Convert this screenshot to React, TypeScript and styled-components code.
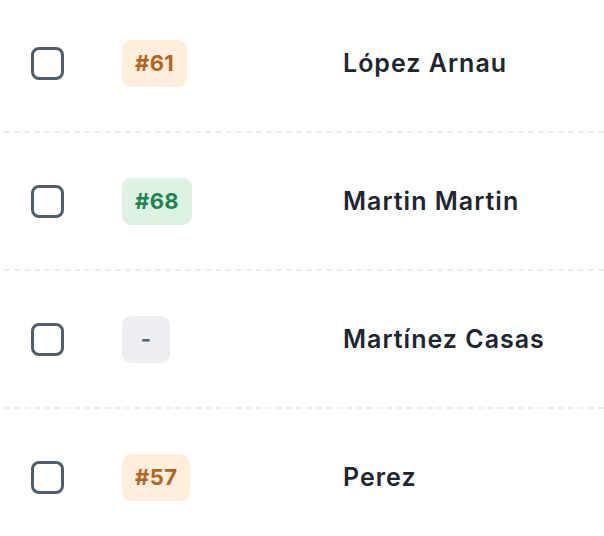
import React from 'react';
import styled, { createGlobalStyle } from 'styled-components';

const GlobalStyle = createGlobalStyle`
  html, body {
    margin: 0;
    padding: 0;
    background: #ffffff;
    overflow: hidden;
  }
  body {
    font-family: Inter, "Noto Sans", "Liberation Sans", sans-serif;
    -webkit-font-smoothing: antialiased;
  }
`;

type Tone = 'orange' | 'green' | 'gray';

const tones: Record<Tone, { bg: string; fg: string }> = {
    orange: { bg: '#feeedb', fg: '#b3651f' },
    green: { bg: '#dcf3e3', fg: '#1f8550' },
    gray: { bg: '#eceef1', fg: '#5b6673' },
};

const Table = styled.div`
  display: flex;
  flex-direction: column;
  margin-top: -5px;
  padding-left: 4px;
`;

const Row = styled.div`
  display: grid;
  grid-template-columns: 118px 221px 1fr;
  align-items: center;
  height: 136px;
  border-bottom: 2px dashed #ececec;

  &:last-child {
    border-bottom: none;
  }
`;

const CheckCell = styled.div`
  padding-left: 27px;
  display: flex;
  align-items: center;
`;

const Checkbox = styled.span`
  box-sizing: border-box;
  width: 33px;
  height: 33px;
  border: 3px solid #4f5e6d;
  border-radius: 8px;
  background: #ffffff;
`;

const Badge = styled.span<{ $tone: Tone }>`
  justify-self: start;
  display: inline-flex;
  align-items: center;
  justify-content: center;
  box-sizing: border-box;
  height: 47px;
  min-width: 48px;
  padding: 0 13px;
  border-radius: 9px;
  background: ${p => tones[p.$tone].bg};
  color: ${p => tones[p.$tone].fg};
  font-size: 22px;
  font-weight: 700;
  letter-spacing: 0.4px;
`;

const Name = styled.span`
  font-size: 25px;
  font-weight: 600;
  letter-spacing: 1px;
  color: #1e2630;
  white-space: nowrap;
`;

interface Player {
    rank: string;
    tone: Tone;
    name: string;
}

const players: Player[] = [
    { rank: '#61', tone: 'orange', name: 'López Arnau' },
    { rank: '#68', tone: 'green', name: 'Martin Martin' },
    { rank: '-', tone: 'gray', name: 'Martínez Casas' },
    { rank: '#57', tone: 'orange', name: 'Perez' },
];

export default function App() {
    return (
        <>
            <GlobalStyle />
            <Table>
                {players.map(p => (
                    <Row key={p.name}>
                        <CheckCell>
                            <Checkbox />
                        </CheckCell>
                        <Badge $tone={p.tone}>{p.rank}</Badge>
                        <Name>{p.name}</Name>
                    </Row>
                ))}
            </Table>
        </>
    );
}
